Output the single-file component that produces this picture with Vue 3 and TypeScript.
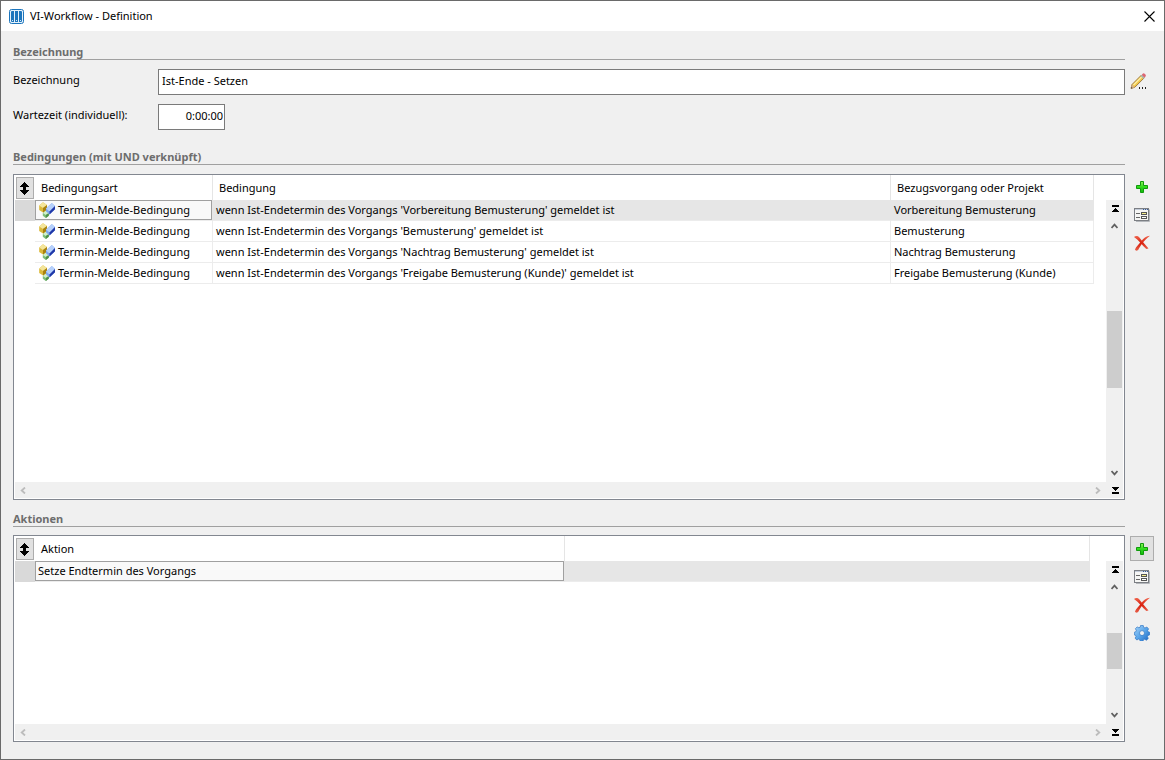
<script setup lang="ts">
import { ref } from 'vue'

interface Condition {
  kind: string
  text: string
  reference: string
}

const title = 'VI-Workflow - Definition'
const name = ref('Ist-Ende - Setzen')
const waitTime = ref('0:00:00')
const selectedCondition = ref(0)

const conditions: Condition[] = [
  {
    kind: 'Termin-Melde-Bedingung',
    text: "wenn Ist-Endetermin des Vorgangs 'Vorbereitung Bemusterung' gemeldet ist",
    reference: 'Vorbereitung Bemusterung',
  },
  {
    kind: 'Termin-Melde-Bedingung',
    text: "wenn Ist-Endetermin des Vorgangs 'Bemusterung' gemeldet ist",
    reference: 'Bemusterung',
  },
  {
    kind: 'Termin-Melde-Bedingung',
    text: "wenn Ist-Endetermin des Vorgangs 'Nachtrag Bemusterung' gemeldet ist",
    reference: 'Nachtrag Bemusterung',
  },
  {
    kind: 'Termin-Melde-Bedingung',
    text: "wenn Ist-Endetermin des Vorgangs 'Freigabe Bemusterung (Kunde)' gemeldet ist",
    reference: 'Freigabe Bemusterung (Kunde)',
  },
]

const actions: string[] = ['Setze Endtermin des Vorgangs']
</script>

<template>
  <div class="window">
    <svg class="symbols" width="0" height="0" aria-hidden="true">
      <defs>
        <linearGradient id="greenFill" x1="0" y1="0" x2="0" y2="1">
          <stop offset="0" stop-color="#8df25a" />
          <stop offset="0.5" stop-color="#2fdc1a" />
          <stop offset="1" stop-color="#12b80c" />
        </linearGradient>
        <linearGradient id="gearFill" x1="0" y1="0" x2="1" y2="1">
          <stop offset="0" stop-color="#a9d6f9" />
          <stop offset="0.5" stop-color="#5aa6ea" />
          <stop offset="1" stop-color="#1a62bd" />
        </linearGradient>
        <linearGradient id="redFill" x1="0" y1="0" x2="0" y2="1">
          <stop offset="0" stop-color="#f0674f" />
          <stop offset="0.5" stop-color="#d81e0c" />
          <stop offset="1" stop-color="#e8604a" />
        </linearGradient>
      </defs>
      <symbol id="plus" viewBox="0 0 16 16">
        <path d="M6.500 2.500h3v4h4v3h-4v4h-3v-4h-4v-3h4z" fill="url(#greenFill)" stroke="#109a0c" stroke-linejoin="round" />
      </symbol>
      <symbol id="form" viewBox="0 0 16 16">
        <path d="M2 14.500h13.500v-12" fill="none" stroke="#b4b7bb" />
        <rect x="0.500" y="1.500" width="14" height="12" fill="#f6f6f4" stroke="#7c7f84" />
        <path d="M1 2.500h13" stroke="#c3cbd8" />
        <path d="M9 2.500h1M11 2.500h1M13 2.500h1" stroke="#3a5d98" />
        <path d="M2 6.500h4M2 10.500h4" stroke="#666" />
        <rect x="7.500" y="5.500" width="5" height="2" fill="#f4ec8a" stroke="#555" />
        <rect x="7.500" y="9.500" width="5" height="2" fill="#fff" stroke="#555" />
      </symbol>
      <symbol id="cross" viewBox="0 0 16 16">
        <path d="M0 2C1.500 0.500 4 0.800 5.200 2.300C8 6 11 9.500 14.500 13.500L12.300 14C8.500 10.500 5 5.500 0 2z" fill="url(#redFill)" />
        <path d="M16 0.800C12 1 9.500 3.500 7 6.500C4.500 9.500 2 12 1 14.500C1.500 16.300 4 15.800 4.700 14C6.500 11 10 5 16 0.800z" fill="url(#redFill)" />
      </symbol>
      <symbol id="gear" viewBox="0 0 16 16">
        <g fill="url(#gearFill)" stroke="#2c74c4" stroke-width="0.700" stroke-linejoin="round">
          <path
            fill-rule="evenodd"
            d="M6.600 0.400h2.600l.5 2 1.300.6 1.800-1 1.800 1.900-1 1.700.5 1.200 1.600.5v2.500l-1.700.6-.6 1.300.9 1.700-1.900 1.800-1.700-1-1.300.6-.5 1.700H6.300l-.6-1.900-1.200-.5-1.700.9-1.700-1.900.9-1.600-.5-1.200-1.200-.4V7.300l1.500-.6.5-1.300-.9-1.700 1.800-1.800 1.700.9 1.300-.6zM8 5.600a2.500 2.500 0 1 0 0 5 2.500 2.500 0 0 0 0-5z"
          />
        </g>
      </symbol>
      <symbol id="cubes" viewBox="0 0 16 16">
        <path d="M3.800 11l3-2.500 3 2.500v2.800l-3 2.200-3-2.200z" fill="#7fbf7a" />
        <path d="M3.800 11l3-2.500 3 2.500-3 2z" fill="#d0efca" />
        <path d="M6.800 13l3-2v2.800l-3 2.200z" fill="#4d9149" />
        <path d="M0.200 3.500L4 0.300l4 2.700v4.500L4 10.500 0.200 8z" fill="#dcb93a" />
        <path d="M0.200 3.500L4 0.300l4 2.700L4 6z" fill="#f4e59a" />
        <path d="M4 6l4-3v4.500L4 10.500z" fill="#a8810f" />
        <path d="M7 6.500L12.800 1l3.200 3v3.200L10.500 12.500 7 9.200z" fill="#7ea6ee" />
        <path d="M7 6.500L12.800 1l3.200 3L10.500 9.500z" fill="#b6d0fb" />
        <path d="M10.500 9.500L16 4v3.200l-5.500 5.300z" fill="#2038a8" />
      </symbol>
      <symbol id="sort" viewBox="0 0 9 13">
        <path d="M4 0h1v1h1v1h1v1h1v1h1v1H6v3h3v1H8v1H7v1H6v1H5v1H4v-1H3v-1H2v-1H1V9H0V8h3V5H0V4h1V3h1V2h1V1h1z" fill="#000" />
      </symbol>
      <symbol id="first" viewBox="0 0 7 7">
        <path d="M0 0h7v2H0zM3 3h1v1h1v1h1v1h1v1H0V6h1V5h1V4h1z" fill="#000" />
      </symbol>
      <symbol id="last" viewBox="0 0 7 7">
        <path d="M0 5h7v2H0zM0 0h7v1H6v1H5v1H4v1H3V3H2V2H1V1H0z" fill="#000" />
      </symbol>
      <symbol id="up" viewBox="0 0 7 6">
        <path d="M0.500 5l3-3.300 3 3.300" fill="none" stroke="#606060" stroke-width="1.800" />
      </symbol>
      <symbol id="down" viewBox="0 0 7 6">
        <path d="M0.500 1l3 3.300 3-3.300" fill="none" stroke="#606060" stroke-width="1.800" />
      </symbol>
      <symbol id="left" viewBox="0 0 6 7">
        <path d="M5 0.500l-3.300 3 3.300 3" fill="none" stroke="#bcbcbc" stroke-width="1.800" />
      </symbol>
      <symbol id="right" viewBox="0 0 6 7">
        <path d="M1 0.500l3.300 3-3.300 3" fill="none" stroke="#bcbcbc" stroke-width="1.800" />
      </symbol>
    </svg>

    <header class="titlebar">
      <svg class="logo" width="15" height="15" viewBox="0 0 15 15" aria-hidden="true">
        <rect x="0.500" y="0.500" width="14" height="14" rx="2" fill="#e4f1fb" stroke="#1c75bc" />
        <path d="M2 3q0-1 1-1h2v11H3q-1 0-1-1zM6 2h3v11H6zM10 2h2q1 0 1 1v9q0 1-1 1h-2z" fill="#1c75bc" />
        <path d="M3 11.500h1M7 11.500h1M11 11.500h1" stroke="#d5e9f8" />
      </svg>
      <h1>{{ title }}</h1>
      <button class="close" type="button" aria-label="Schließen">
        <svg width="11" height="11" viewBox="0 0 11 11"><path d="M0.500 0.500l10 10M10.500 0.500l-10 10" stroke="#000" stroke-width="1.100" /></svg>
      </button>
    </header>

    <main>
      <h2>Bezeichnung</h2>
      <div class="field">
        <label for="name">Bezeichnung</label>
        <input id="name" v-model="name" class="wide" type="text" />
        <button class="tool edit" type="button" aria-label="Bezeichnung bearbeiten">
          <svg width="18" height="18" viewBox="0 0 18 18">
            <path d="M2 11.500L11.500 2l2.800 2.800L4.800 14.300L1 15.500z" fill="#f2c84b" stroke="#94703a" stroke-width="0.900" />
            <path d="M3.500 12L12 3.500" stroke="#fdf0a8" stroke-width="1.200" />
            <path d="M1 15.500l1-4 2.800 2.800z" fill="#d9b48c" />
            <path d="M1 15.500l.4-1.600 1.200 1.200z" fill="#333" />
            <path d="M10.500 3l1.300-1.300 2.800 2.800-1.300 1.300z" fill="#a9b7b0" />
            <path d="M11.800 1.700L13 .6q.8-.6 1.600.1l1 1q.7.800 0 1.600l-1.200 1.200z" fill="#dd6672" />
            <path d="M9 14h1v2H9zM12 14h1v2h-1zM15 14h1v2h-1z" fill="#222" />
          </svg>
        </button>
      </div>
      <div class="field">
        <label for="wait">Wartezeit (individuell):</label>
        <input id="wait" v-model="waitTime" class="time" type="text" />
      </div>

      <h2 class="spaced">Bedingungen (mit UND verknüpft)</h2>
      <section class="group large">
        <div class="list">
          <div class="grid-area">
            <table class="conditions">
              <colgroup>
                <col class="marker-col" />
                <col class="kind-col" />
                <col />
                <col class="ref-col" />
              </colgroup>
              <thead>
                <tr>
                  <th class="corner">
                    <button class="sort" type="button" aria-label="Reihenfolge ändern"><svg width="9" height="13"><use href="#sort" /></svg></button>
                  </th>
                  <th>Bedingungsart</th>
                  <th>Bedingung</th>
                  <th>Bezugsvorgang oder Projekt</th>
                </tr>
              </thead>
              <tbody>
                <tr
                  v-for="(item, index) in conditions"
                  :key="item.reference"
                  :class="{ selected: index === selectedCondition }"
                  @click="selectedCondition = index"
                >
                  <td class="marker"></td>
                  <td>
                    <div class="cell first-cell with-icon">
                      <svg width="16" height="16" aria-hidden="true"><use href="#cubes" /></svg>{{ item.kind }}
                    </div>
                  </td>
                  <td><div class="cell">{{ item.text }}</div></td>
                  <td><div class="cell">{{ item.reference }}</div></td>
                </tr>
              </tbody>
            </table>
          </div>
          <div class="vbar">
            <button class="edge" type="button" aria-label="Zum Anfang"><svg width="7" height="7"><use href="#first" /></svg></button>
            <button class="step" type="button" aria-label="Nach oben"><svg width="7" height="6"><use href="#up" /></svg></button>
            <div class="track"><div class="thumb"></div></div>
            <button class="step" type="button" aria-label="Nach unten"><svg width="7" height="6"><use href="#down" /></svg></button>
          </div>
          <div class="hbar">
            <button type="button" aria-label="Nach links" disabled><svg width="6" height="7"><use href="#left" /></svg></button>
            <button type="button" aria-label="Nach rechts" disabled><svg width="6" height="7"><use href="#right" /></svg></button>
          </div>
          <button class="end" type="button" aria-label="Zum Ende"><svg width="7" height="7"><use href="#last" /></svg></button>
        </div>
        <div class="tools">
          <button class="tool" type="button" aria-label="Bedingung hinzufügen"><svg width="16" height="16"><use href="#plus" /></svg></button>
          <button class="tool" type="button" aria-label="Bedingung bearbeiten"><svg width="16" height="16"><use href="#form" /></svg></button>
          <button class="tool" type="button" aria-label="Bedingung löschen"><svg width="16" height="16"><use href="#cross" /></svg></button>
        </div>
      </section>

      <h2 class="after-list">Aktionen</h2>
      <section class="group small">
        <div class="list">
          <div class="grid-area wide-gap">
            <table class="actions">
              <colgroup>
                <col class="marker-col" />
                <col class="action-col" />
                <col />
              </colgroup>
              <thead>
                <tr>
                  <th class="corner">
                    <button class="sort" type="button" aria-label="Reihenfolge ändern"><svg width="9" height="13"><use href="#sort" /></svg></button>
                  </th>
                  <th>Aktion</th>
                  <th></th>
                </tr>
              </thead>
              <tbody>
                <tr v-for="action in actions" :key="action" class="selected">
                  <td class="marker"></td>
                  <td><div class="cell first-cell">{{ action }}</div></td>
                  <td></td>
                </tr>
              </tbody>
            </table>
          </div>
          <div class="vbar">
            <button class="edge" type="button" aria-label="Zum Anfang"><svg width="7" height="7"><use href="#first" /></svg></button>
            <button class="step" type="button" aria-label="Nach oben"><svg width="7" height="6"><use href="#up" /></svg></button>
            <div class="track"><div class="thumb"></div></div>
            <button class="step" type="button" aria-label="Nach unten"><svg width="7" height="6"><use href="#down" /></svg></button>
          </div>
          <div class="hbar">
            <button type="button" aria-label="Nach links" disabled><svg width="6" height="7"><use href="#left" /></svg></button>
            <button type="button" aria-label="Nach rechts" disabled><svg width="6" height="7"><use href="#right" /></svg></button>
          </div>
          <button class="end" type="button" aria-label="Zum Ende"><svg width="7" height="7"><use href="#last" /></svg></button>
        </div>
        <div class="tools action-tools">
          <button class="tool active" type="button" aria-label="Aktion hinzufügen"><svg width="16" height="16"><use href="#plus" /></svg></button>
          <button class="tool" type="button" aria-label="Aktion bearbeiten"><svg width="16" height="16"><use href="#form" /></svg></button>
          <button class="tool" type="button" aria-label="Aktion löschen"><svg width="16" height="16"><use href="#cross" /></svg></button>
          <button class="tool" type="button" aria-label="Einstellungen"><svg width="16" height="16"><use href="#gear" /></svg></button>
        </div>
      </section>
    </main>
  </div>
</template>

<style>
body {
  margin: 0;
  background: #f0f0f0;
}
</style>

<style scoped>
* {
  box-sizing: border-box;
}

.window {
  display: flex;
  flex-direction: column;
  min-height: 100vh;
  border: 1px solid #6a6a6a;
  background: #f0f0f0;
  color: #000;
  font: 11px/14px "Noto Sans", "Open Sans", sans-serif;
}

.symbols {
  position: absolute;
}

svg {
  display: block;
  flex: none;
}

button {
  display: flex;
  align-items: center;
  justify-content: center;
  padding: 0;
  border: 0;
  background: transparent;
}

.titlebar {
  display: flex;
  align-items: center;
  height: 30px;
  padding-left: 8px;
  background: #fff;
}

h1 {
  flex: 1;
  margin: 0 0 0 6px;
  font-size: 11px;
  font-weight: 400;
}

.close {
  width: 30px;
  height: 28px;
}

main {
  flex: 1;
  display: flex;
  flex-direction: column;
  padding: 14px 0 17px 12px;
}

h2 {
  margin: 0 39px 9px 0;
  border-bottom: 1px solid #a0a0a0;
  color: #6d6d6d;
  font-size: 11px;
  font-weight: 700;
  line-height: 14px;
}

h2.spaced {
  margin-top: 11px;
}

h2.after-list {
  margin-top: 12px;
  margin-bottom: 8px;
}

.field {
  display: grid;
  grid-template-columns: 145px 1fr 39px;
  height: 26px;
  margin-bottom: 9px;
}

.field label {
  padding-top: 4px;
}

input {
  height: 26px;
  padding: 0 3px 3px;
  border: 1px solid #7a7a7a;
  border-radius: 0;
  background: #fff;
  color: #000;
  font: inherit;
}

.time {
  width: 67px;
  padding-right: 1px;
  text-align: right;
}

.group {
  display: grid;
  grid-template-columns: 1fr 39px;
}

.large {
  flex: 326 0 0;
}

.small {
  flex: 207 0 0;
}

.list {
  display: grid;
  grid-template: 1fr 16px / 1fr 17px;
  padding: 0 1px 1px;
  border: 1px solid #828790;
  background: #fff;
}

.grid-area {
  padding-right: 12px;
}

.wide-gap {
  padding-right: 16px;
}

table {
  width: 100%;
  table-layout: fixed;
  border-collapse: separate;
  border-spacing: 0;
}

.marker-col {
  width: 20px;
}

.kind-col {
  width: 178px;
}

.ref-col {
  width: 203px;
}

.action-col {
  width: 530px;
}

th {
  height: 25px;
  padding: 0 6px;
  border-right: 1px solid #e5e5e5;
  font-weight: 400;
  text-align: left;
}

.corner {
  padding: 2px 1px 1px;
  border: 0;
}

.sort {
  width: 18px;
  height: 22px;
  padding-right: 1px;
  border: 1px solid #adadad;
  background: #e1e1e1;
}

td {
  height: 21px;
  padding: 0;
  border-right: 1px solid #ececec;
  border-bottom: 1px solid #ececec;
}

.marker {
  border: 0;
}

.cell {
  height: 20px;
  padding: 0 3px;
  line-height: 19px;
  white-space: nowrap;
  overflow: hidden;
}

.first-cell {
  padding: 0 2px;
  border: 1px solid transparent;
  line-height: 18px;
}

.with-icon {
  display: flex;
  align-items: center;
  gap: 3px;
  padding-left: 3px;
}

.selected td {
  border-right-color: #e6e6e6;
  background: #e6e6e6;
}

.selected .marker {
  background: #d9d9d9;
}

.selected .first-cell {
  border-color: #a0a0a0;
  background: #f9f9f9;
}

.vbar {
  display: flex;
  flex-direction: column;
  margin-top: 25px;
  background: #f0f0f0;
}

.edge {
  height: 17px;
  padding-left: 2px;
}

.step {
  height: 18px;
}

.track {
  flex: 1;
  display: grid;
  grid-template-rows: 1fr 1fr 1fr;
}

.thumb {
  grid-row: 2;
  margin: 0 1px;
  background: #cdcdcd;
}

.hbar {
  display: flex;
  justify-content: space-between;
  background: #f0f0f0;
}

.hbar button {
  width: 16px;
}

.end {
  padding-left: 2px;
  background: #f0f0f0;
}

.tools {
  display: flex;
  flex-direction: column;
  gap: 3px;
  padding-left: 5px;
}

.action-tools {
  padding-top: 1px;
}

.tool {
  width: 24px;
  height: 25px;
}

.active {
  border: 1px solid #adadad;
  background: #e1e1e1;
}

.edit {
  margin-left: 2px;
}
</style>
